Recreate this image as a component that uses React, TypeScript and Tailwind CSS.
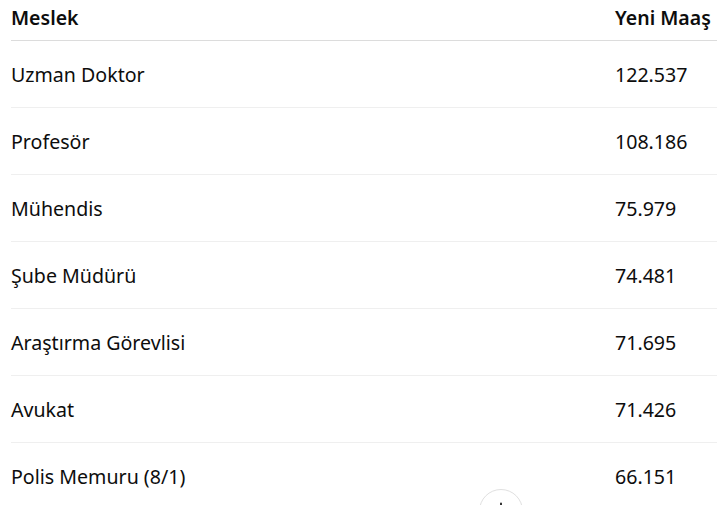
import React from "react";

const rows: [string, string][] = [
  ["Uzman Doktor", "122.537"],
  ["Profesör", "108.186"],
  ["Mühendis", "75.979"],
  ["Şube Müdürü", "74.481"],
  ["Araştırma Görevlisi", "71.695"],
  ["Avukat", "71.426"],
  ["Polis Memuru (8/1)", "66.151"],
];

export default function App() {
  return (
    <div
      className="relative w-[717px] h-[505px] overflow-hidden bg-white text-[#0d0d0d]"
      style={{ fontFamily: '"Segoe UI", "Noto Sans", "Open Sans", sans-serif' }}
    >
      <div className="pl-[11px]">
        <div className="flex h-[41px] items-center border-b border-[#dcdcdc] pb-[5px] text-[19.5px] font-semibold leading-none">
          <div className="w-[604px]">Meslek</div>
          <div>Yeni Maaş</div>
        </div>
        {rows.map(([a, b]) => (
          <div
            key={a}
            className="flex h-[67px] items-center border-b border-[#efefef] pt-[2px] text-[19.6px] font-normal leading-none"
          >
            <div className="w-[604px]">{a}</div>
            <div>{b}</div>
          </div>
        ))}
      </div>
      <div className="absolute left-[479px] top-[489px] flex h-[44px] w-[44px] items-start justify-center rounded-full border border-[#e0e0e0] bg-white pt-[10px]">
        <svg width="16" height="16" viewBox="0 0 24 24" fill="none" stroke="#0d0d0d" strokeWidth="2.5" strokeLinecap="round" strokeLinejoin="round">
          <path d="M12 5v14M5 12l7 7 7-7" />
        </svg>
      </div>
    </div>
  );
}
